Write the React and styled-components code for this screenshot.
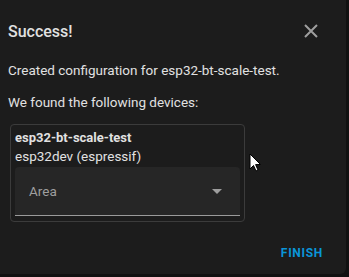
import React from 'react'
import styled, { createGlobalStyle } from 'styled-components'

const GlobalStyle = createGlobalStyle`
  html, body {
    margin: 0;
    padding: 0;
    background: #111111;
    width: 349px;
    height: 277px;
    overflow: hidden;
  }
  body {
    font-family: Roboto, "Noto Sans", sans-serif;
    -webkit-font-smoothing: antialiased;
  }
`

const Page = styled.div`
  display: flex;
  width: 349px;
  height: 277px;
  position: relative;
`

const Dialog = styled.div`
  width: 346px;
  height: 274px;
  background: #1c1c1c;
  border-bottom-right-radius: 6px;
  box-sizing: border-box;
  display: flex;
  flex-direction: column;
  color: #e1e1e1;
`

const Header = styled.div`
  display: flex;
  align-items: center;
  justify-content: space-between;
  padding: 19px 23px 0 8px;
  height: 24px;
`

const Title = styled.h2`
  margin: 0;
  font-size: 16px;
  font-weight: 500;
  color: #e1e1e1;
`

const CloseButton = styled.button`
  background: none;
  border: 0;
  padding: 0;
  width: 24px;
  height: 24px;
  display: flex;
  align-items: center;
  justify-content: center;
  color: #9e9e9e;
`

const Content = styled.div`
  padding: 0 8px;
  display: flex;
  flex-direction: column;
`

const Text = styled.p`
  margin: ${p => p.top}px 0 0;
  font-size: 13.5px;
  line-height: 16px;
  color: #e1e1e1;
`

const Card = styled.div`
  margin: 14px 0 0 2px;
  width: 235px;
  border: 1px solid #3b3b3b;
  border-radius: 4px;
  padding: 4px 4px 5px;
  box-sizing: border-box;
`

const DeviceName = styled.div`
  font-size: 13px;
  font-weight: 700;
  line-height: 18px;
  color: #e1e1e1;
`

const DeviceModel = styled.div`
  font-size: 13.5px;
  line-height: 18px;
  color: #e1e1e1;
`

const Select = styled.div`
  margin-top: 2px;
  height: 49px;
  background: #262626;
  border-radius: 4px 4px 0 0;
  border-bottom: 1px solid #9a9a9a;
  box-sizing: border-box;
  display: flex;
  align-items: center;
  justify-content: space-between;
  padding: 0 18px 0 14px;
`

const Label = styled.span`
  font-size: 13.5px;
  color: #9e9e9e;
`

const Actions = styled.div`
  margin-top: auto;
  display: flex;
  justify-content: flex-end;
  padding: 0 23px 14px;
`

const FinishButton = styled.button`
  background: none;
  border: 0;
  padding: 0;
  font-family: Roboto, sans-serif;
  font-size: 12px;
  font-weight: 700;
  letter-spacing: 0.7px;
  color: #0a95d8;
`

const Cursor = styled.svg`
  position: absolute;
  left: 249px;
  top: 153px;
`

const Edge = styled.div`
  flex: 1;
  background: #111;
`

export default function App() {
  return (
    <Page>
      <GlobalStyle />
      <Dialog>
        <Header>
          <Title>Success!</Title>
          <CloseButton>
            <svg width="14" height="14" viewBox="0 0 14 14">
              <path d="M1 1 L13 13 M13 1 L1 13" stroke="#9e9e9e" strokeWidth="2" />
            </svg>
          </CloseButton>
        </Header>
        <Content>
          <Text top={19}>Created configuration for esp32-bt-scale-test.</Text>
          <Text top={16}>We found the following devices:</Text>
          <Card>
            <DeviceName>esp32-bt-scale-test</DeviceName>
            <DeviceModel>esp32dev (espressif)</DeviceModel>
            <Select>
              <Label>Area</Label>
              <svg width="10" height="5" viewBox="0 0 10 5">
                <path d="M0 0 L10 0 L5 5 Z" fill="#9e9e9e" />
              </svg>
            </Select>
          </Card>
        </Content>
        <Actions>
          <FinishButton>FINISH</FinishButton>
        </Actions>
      </Dialog>
      <Edge />
      <Cursor width="14" height="20" viewBox="0 0 14 20">
        <path d="M1 1 L1 16 L4.5 12.5 L7 18 L9 17 L6.6 11.6 L11.5 11.5 Z" fill="#fff" stroke="#000" strokeWidth="1" />
      </Cursor>
    </Page>
  )
}
